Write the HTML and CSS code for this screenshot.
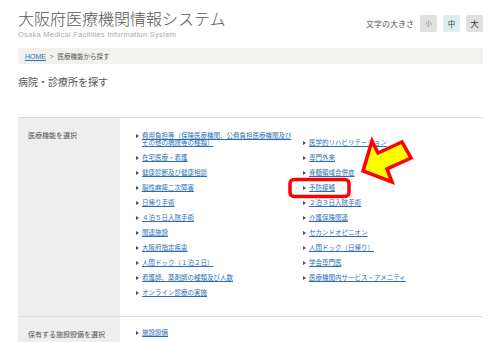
FILE: index.html
```html
<!DOCTYPE html>
<html lang="ja">

<head>
    <meta charset="UTF-8">
    <meta name="viewport" content="width=device-width, initial-scale=1.0">
    <title>大阪府医療機関情報システム</title>
    <link rel="stylesheet" href="styles.css">
</head>

<body>

    <div class="page">
        <!-- Header -->
        <header class="site-header">
            <div class="brand">
                <h1 class="site-title">大阪府医療機関情報システム</h1>
                <p class="site-sub">Osaka Medical Facilities Information System</p>
            </div>
            <div class="font-size">
                <span class="font-size-label">文字の大きさ</span>
                <button class="fs-btn fs-small">小</button>
                <button class="fs-btn fs-mid">中</button>
                <button class="fs-btn fs-large">大</button>
            </div>
        </header>

        <div class="breadcrumb"><a href="#">HOME</a><span class="sep">&gt;</span>医療機能から探す</div>

        <h2 class="page-title">病院・診療所を探す</h2>

        <!-- Search table -->
        <div class="search-table">
            <div class="search-row">
                <div class="search-label">医療機能を選択</div>
                <ul class="search-list">
                    <li><a href="#">費用負担等（保険医療機関、公費負担医療機関及びその他の病院等の種類）</a></li>
                    <li><a href="#">医学的リハビリテーション</a></li>
                    <li><a href="#">在宅医療・看護</a></li>
                    <li><a href="#">専門外来</a></li>
                    <li><a href="#">健康診断及び健康相談</a></li>
                    <li><a href="#">脊髄領域合併症</a></li>
                    <li><a href="#">脳性麻痺二次障害</a></li>
                    <li><a href="#">予防接種</a></li>
                    <li><a href="#">日帰り手術</a></li>
                    <li><a href="#">２泊３日入院手術</a></li>
                    <li><a href="#">４泊５日入院手術</a></li>
                    <li><a href="#">介護保険関連</a></li>
                    <li><a href="#">関連施設</a></li>
                    <li><a href="#">セカンドオピニオン</a></li>
                    <li><a href="#">大阪府指定疾患</a></li>
                    <li><a href="#">人間ドック（日帰り）</a></li>
                    <li><a href="#">人間ドック（１泊２日）</a></li>
                    <li><a href="#">学会専門医</a></li>
                    <li><a href="#">看護師、薬剤師の種類及び人数</a></li>
                    <li><a href="#">医療機関内サービス・アメニティ</a></li>
                    <li><a href="#">オンライン診療の実施</a></li>
                </ul>
            </div>
            <div class="search-row">
                <div class="search-label">保有する施設設備を選択</div>
                <ul class="search-list">
                    <li><a href="#">施設設備</a></li>
                </ul>
            </div>
        </div>
    </div>

    <!-- Annotation over the screenshot -->
    <svg class="annotation" width="500" height="342" viewBox="0 0 500 342">
        <rect x="290" y="179.5" width="59" height="17" rx="4" fill="none" stroke="#ff0000" stroke-width="3.5"/>
        <polygon points="363,171 372,141 378,153 402,142 411,158 387,169 392,182"
                 fill="#ffff00" stroke="#ff0000" stroke-width="3.5" stroke-linejoin="miter"/>
    </svg>

</body>

</html>
```

FILE: styles.css
```css
body {
    font-family: "Noto Sans CJK JP", "Liberation Sans", sans-serif;
    background-color: #fff;
    color: #555;
    margin: 0;
    padding: 0;
}

.page {
    width: 465px;
    margin: 0 18px;
}

/* header */
.site-header {
    display: flex;
    justify-content: space-between;
    align-items: flex-start;
    padding-top: 8px;
}

.site-title {
    font-size: 16px;
    line-height: 20px;
    font-weight: 300;
    color: #555;
    margin: 0;
}

.site-sub {
    font-family: "Liberation Sans", Arial, sans-serif;
    font-size: 7.5px;
    line-height: 10px;
    letter-spacing: 0.25px;
    color: #aaa;
    margin: 2px 0 0;
}

.font-size {
    display: flex;
    align-items: center;
    gap: 6px;
    margin-top: 7px;
}

.font-size-label {
    font-size: 8px;
    color: #555;
}

.fs-btn {
    width: 17px;
    height: 17px;
    padding: 0;
    border: none;
    border-radius: 2px;
    background-color: #e0e0e0;
    font-family: "Noto Sans CJK JP", sans-serif;
    color: #444;
    line-height: 17px;
}

.fs-small {
    font-size: 6.5px;
    color: #888;
}

.fs-mid {
    font-size: 7.5px;
    background-color: #dcefee;
}

.fs-large {
    font-size: 8.5px;
    color: #333;
}

/* breadcrumb */
.breadcrumb {
    margin-top: 8px;
    height: 16px;
    line-height: 16px;
    padding-left: 7px;
    background-color: #f1f1ed;
    font-size: 6.5px;
    color: #555;
}

.breadcrumb a {
    font-family: "Liberation Sans", Arial, sans-serif;
    font-size: 7px;
    color: #2a73b8;
}

.breadcrumb .sep {
    margin: 0 4px;
    color: #777;
}

.page-title {
    font-size: 10px;
    line-height: 12px;
    font-weight: normal;
    color: #555;
    margin: 12px 0 0;
}

/* search table */
.search-table {
    margin-top: 29px;
}

.search-row {
    display: grid;
    grid-template-columns: 102px 1fr;
    border-top: 1px solid #dcdcdc;
}

.search-label {
    background-color: #eeeeee;
    padding: 12px 0 0 10px;
    font-size: 7px;
    line-height: 10px;
    color: #555;
}

.search-list {
    list-style: none;
    margin: 0;
    padding: 14px 0 20px 16px;
    display: grid;
    grid-template-columns: 167px 1fr;
    row-gap: 8px;
    align-items: end;
}

.search-row + .search-row .search-list {
    padding-top: 12px;
}

.search-list li {
    display: flex;
    align-items: flex-start;
    font-size: 6.5px;
    line-height: 7px;
}

.search-list li::before {
    content: "";
    flex: none;
    margin: 1.5px 3px 0 0;
    border-left: 3px solid #3a4a8c;
    border-top: 2px solid transparent;
    border-bottom: 2px solid transparent;
}

.search-list li:first-child a {
    max-width: 152px;
}

.search-list a {
    color: #2a6fb5;
    text-decoration: underline;
}

/* annotation overlay */
.annotation {
    position: absolute;
    left: 0;
    top: 0;
    pointer-events: none;
}
```
